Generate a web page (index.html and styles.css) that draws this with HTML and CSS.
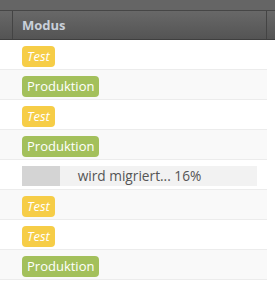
FILE: index.html
```html
<!DOCTYPE html>
<html lang="de">
<head>
<meta charset="utf-8">
<link rel="stylesheet" href="styles.css">
</head>
<body>
<div class="top"></div>
<div class="head">
  <div class="hcell hcell-left"></div>
  <div class="hcell hcell-main">Modus</div>
  <div class="hcell hcell-right"></div>
</div>
<div class="rows">
  <div class="row"><span class="badge test">Test</span></div>
  <div class="row alt"><span class="badge prod">Produktion</span></div>
  <div class="row"><span class="badge test">Test</span></div>
  <div class="row alt"><span class="badge prod">Produktion</span></div>
  <div class="row">
    <div class="progress">
      <div class="progress-fill" style="width:16%"></div>
      <div class="progress-label">wird migriert... 16%</div>
    </div>
  </div>
  <div class="row alt"><span class="badge test">Test</span></div>
  <div class="row"><span class="badge test">Test</span></div>
  <div class="row alt"><span class="badge prod">Produktion</span></div>
</div>
</body>
</html>
```
FILE: styles.css
```css
html, body {
  margin: 0;
  padding: 0;
  background: #ffffff;
  font-family: "Open Sans", "Liberation Sans", sans-serif;
}
.top {
  height: 10px;
  background: #656565;
  border-bottom: 1px solid #464646;
}
.head {
  display: flex;
  height: 28px;
  background: linear-gradient(#686868, #545454);
  border-bottom: 1px solid #3f3f3f;
}
.hcell-left { width: 12px; }
.hcell-main {
  flex: 1;
  border-left: 1px solid #444;
  border-right: 1px solid #444;
  padding-left: 9px;
  display: flex;
  align-items: center;
  font-size: 13px;
  font-weight: 700;
  color: #c9d0da;
}
.hcell-right { width: 8px; }
.rows { width: 267px; }
.row {
  box-sizing: border-box;
  height: 30px;
  border-bottom: 1px solid #ececec;
  padding: 6px 0 0 22px;
  display: flex;
  align-items: flex-start;
}
.row.alt { background: #f9f9f9; }
.badge {
  display: inline-block;
  height: 21px;
  line-height: 21px;
  padding: 0 5px;
  border-radius: 4px;
  color: #ffffff;
  font-size: 13px;
}
.badge.test { background: #f6cd47; font-style: italic; }
.badge.prod { background: #a3c05b; }
.progress {
  display: grid;
  width: 235px;
  height: 20px;
  background: #f2f2f2;
}
.progress > * { grid-area: 1 / 1; }
.progress-fill { background: #d4d4d4; height: 100%; }
.progress-label {
  text-align: center;
  line-height: 20px;
  font-size: 13.7px;
  color: #555555;
}
```
